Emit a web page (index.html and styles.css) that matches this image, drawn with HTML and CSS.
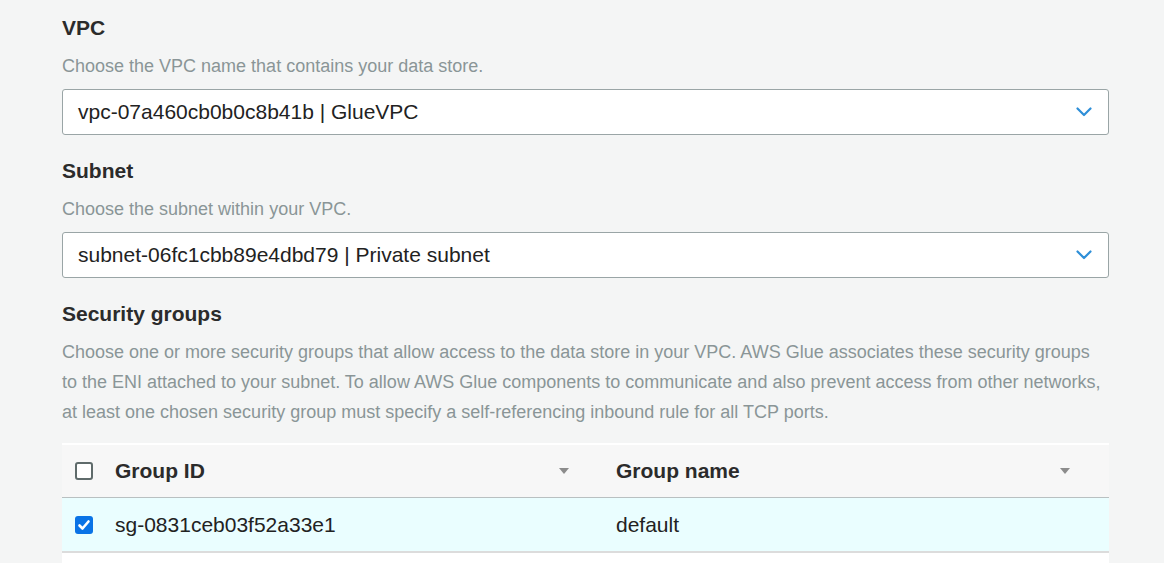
FILE: index.html
```html
<!DOCTYPE html>
<html>
<head>
<meta charset="utf-8">
<link rel="stylesheet" href="styles.css">
</head>
<body>
<div class="page">
  <div class="field">
    <div class="label">VPC</div>
    <div class="desc">Choose the VPC name that contains your data store.</div>
    <div class="select">
      <span class="value">vpc-07a460cb0b0c8b41b | GlueVPC</span>
      <svg class="chev" width="16" height="10" viewBox="0 0 16 10"><path d="M1.5 1.5 L8 8 L14.5 1.5" fill="none" stroke="#2e8fd8" stroke-width="2.2" stroke-linecap="round" stroke-linejoin="round"/></svg>
    </div>
  </div>
  <div class="field">
    <div class="label">Subnet</div>
    <div class="desc">Choose the subnet within your VPC.</div>
    <div class="select">
      <span class="value">subnet-06fc1cbb89e4dbd79 | Private subnet</span>
      <svg class="chev" width="16" height="10" viewBox="0 0 16 10"><path d="M1.5 1.5 L8 8 L14.5 1.5" fill="none" stroke="#2e8fd8" stroke-width="2.2" stroke-linecap="round" stroke-linejoin="round"/></svg>
    </div>
  </div>
  <div class="field last">
    <div class="label">Security groups</div>
    <div class="desc">Choose one or more security groups that allow access to the data store in your VPC. AWS Glue associates these security groups to the ENI attached to your subnet. To allow AWS Glue components to communicate and also prevent access from other networks, at least one chosen security group must specify a self-referencing inbound rule for all TCP ports.</div>
  </div>
  <div class="table">
    <div class="row head">
      <div class="cell cb"><span class="box"></span></div>
      <div class="cell c1"><span>Group ID</span><span class="sort"></span></div>
      <div class="cell c2"><span>Group name</span><span class="sort"></span></div>
    </div>
    <div class="row sel">
      <div class="cell cb"><span class="box checked"><svg width="18" height="18" viewBox="0 0 18 18"><path d="M4.5 9.5 L7.5 12.5 L13.5 5.5" fill="none" stroke="#fff" stroke-width="2.6" stroke-linecap="round" stroke-linejoin="round"/></svg></span></div>
      <div class="cell c1"><span>sg-0831ceb03f52a33e1</span></div>
      <div class="cell c2"><span>default</span></div>
    </div>
    <div class="row empty"></div>
  </div>
</div>
</body>
</html>
```
FILE: styles.css
```css
* { box-sizing: border-box; }
html, body { margin: 0; padding: 0; }
body {
  background: #f4f5f5;
  font-family: "Liberation Sans", Arial, sans-serif;
  color: #222;
  width: 1164px;
  height: 563px;
  overflow: hidden;
}
.page {
  padding: 13px 55px 0 62px;
  width: 1164px;
}
.field { margin-bottom: 21px; }
.field.last { margin-bottom: 16px; }
.label {
  font-size: 21px;
  font-weight: bold;
  line-height: 30px;
  color: #2b2b2b;
  margin-bottom: 8px;
}
.desc {
  font-size: 18px;
  line-height: 30px;
  color: #8a9597;
  margin-bottom: 8px;
}
.field.last .desc { margin-bottom: 0; }
.select {
  height: 46px;
  background: #fff;
  border: 1px solid #9aa5a6;
  border-radius: 3px;
  display: flex;
  align-items: center;
  justify-content: space-between;
  padding: 0 16px 0 15px;
  font-size: 21px;
  color: #222;
}
.chev { display: block; }
.table {
  width: 1047px;
  background: #fff;
  border-top: 2px solid #ffffff;
}
.row {
  display: grid;
  grid-template-columns: 53px 493px 1fr;
  font-size: 21px;
}
.head {
  height: 53px;
  background: #f7f7f7;
  border-bottom: 1px solid #b9c0c1;
  font-weight: bold;
  color: #2b2b2b;
}
.sel {
  height: 55px;
  background: #eafeff;
  border-bottom: 2px solid #dcdcdc;
}
.empty { height: 20px; background: #fff; }
.cell {
  display: flex;
  align-items: center;
}
.cb { padding-left: 13px; }
.c1 { justify-content: space-between; padding-right: 39px; }
.c2 { justify-content: space-between; padding-left: 8px; padding-right: 39px; }
.sort {
  width: 0;
  height: 0;
  border-left: 5.5px solid transparent;
  border-right: 5.5px solid transparent;
  border-top: 6px solid #8c8c8c;
}
.box {
  width: 18px;
  height: 18px;
  border: 2px solid #5f6b6b;
  border-radius: 3px;
  background: #fff;
  display: block;
  position: relative;
}
.box.checked {
  border: none;
  background: #0a73e6;
}
.box svg { display: block; }
```
